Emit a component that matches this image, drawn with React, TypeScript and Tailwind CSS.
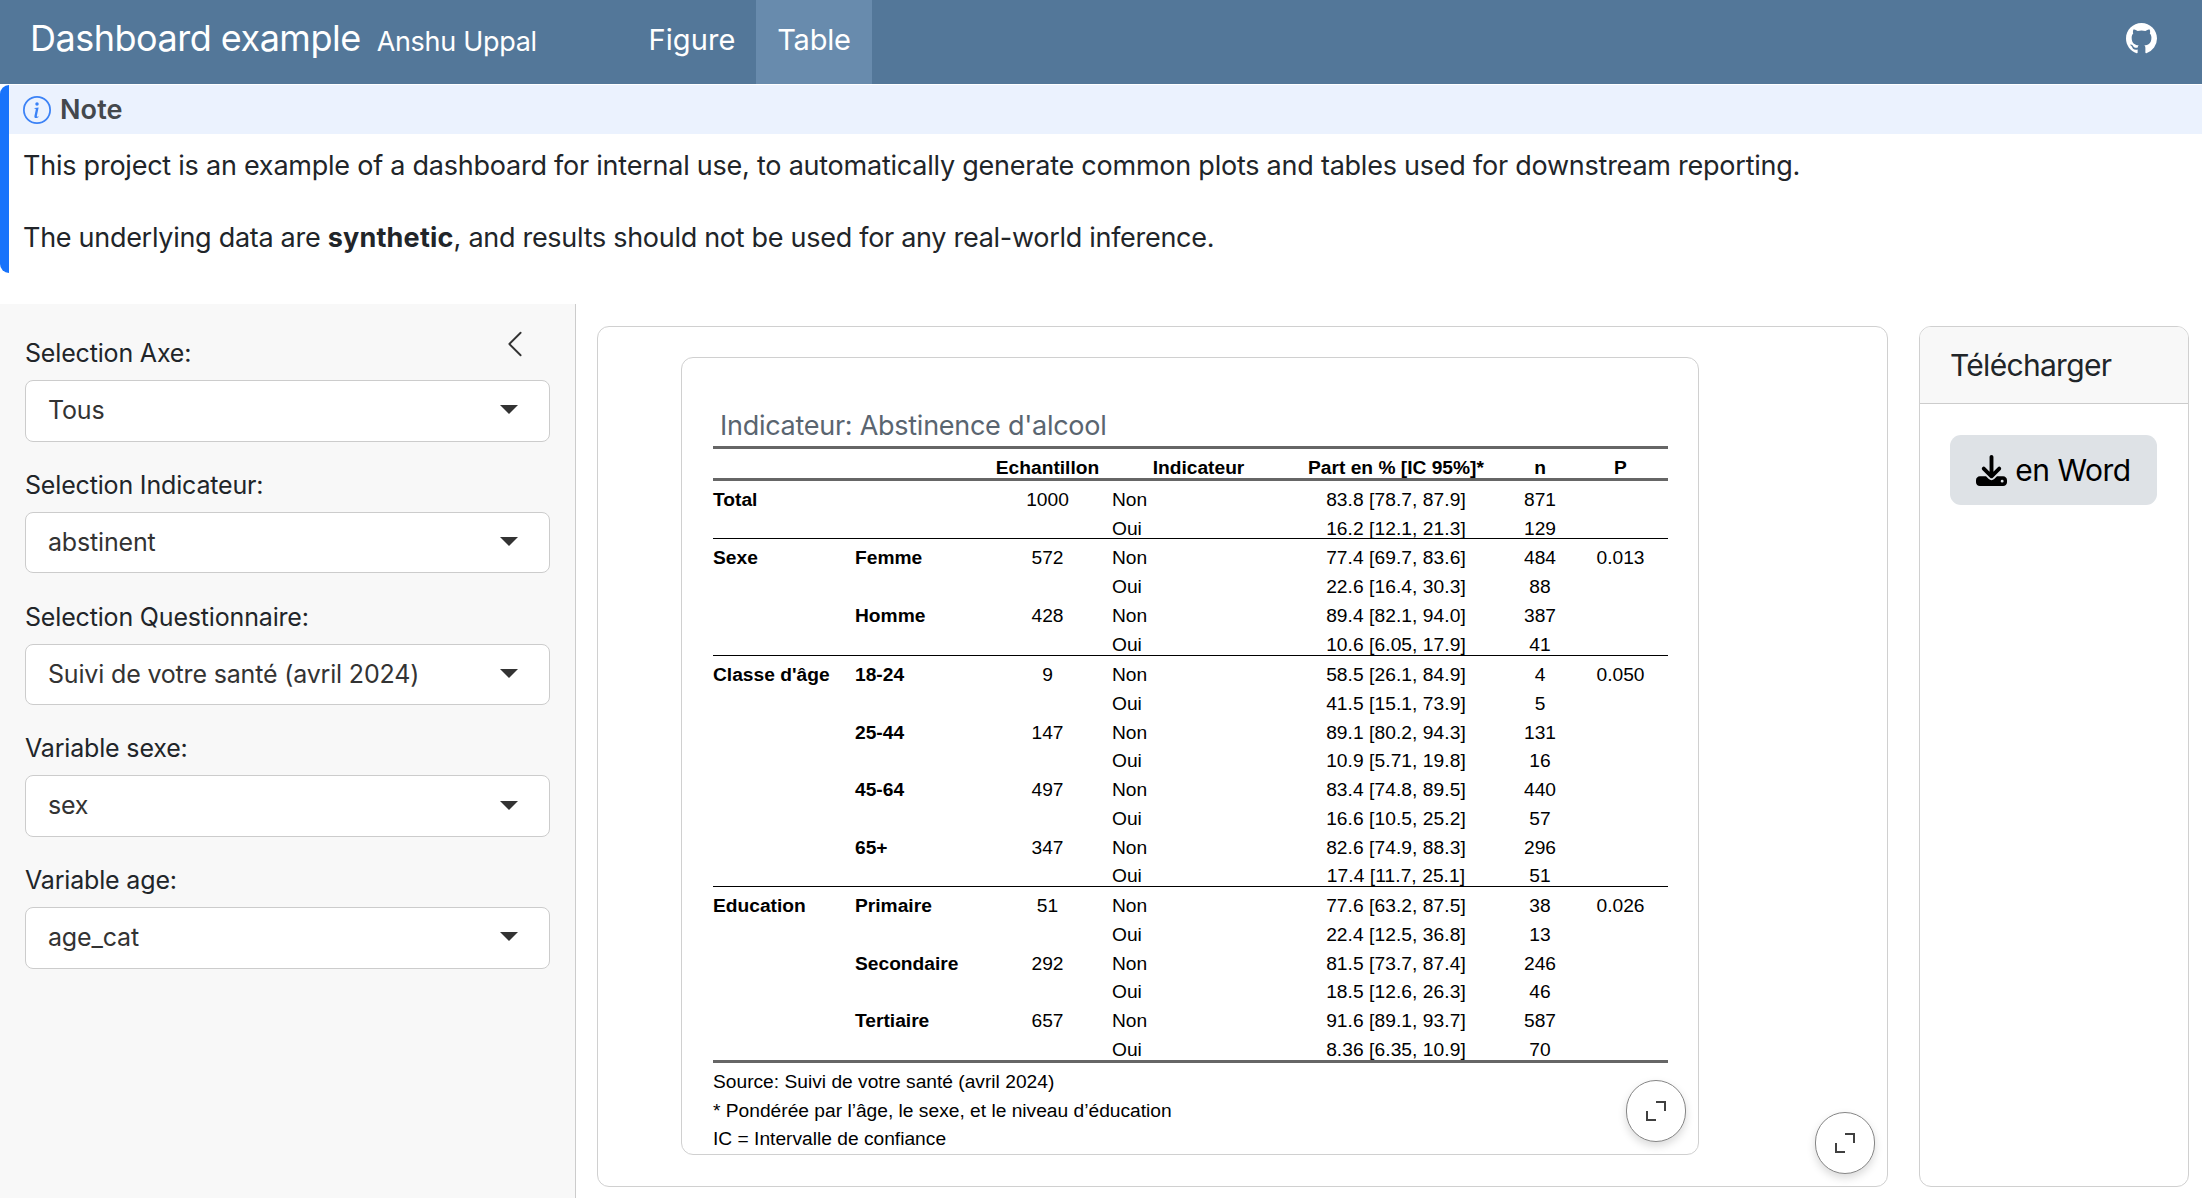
import { BsGithub, BsInfoCircle, BsChevronLeft } from 'react-icons/bs';
import { FaDownload } from 'react-icons/fa6';

const selects = [
  { label: 'Selection Axe:', value: 'Tous' },
  { label: 'Selection Indicateur:', value: 'abstinent' },
  { label: 'Selection Questionnaire:', value: 'Suivi de votre santé (avril 2024)' },
  { label: 'Variable sexe:', value: 'sex' },
  { label: 'Variable age:', value: 'age_cat' },
];

type Row = [string, string, string, string, string, string, string];

const groups: { height: string; rows: Row[] }[] = [
  {
    height: 'h-[58px]',
    rows: [
      ['Total', '', '1000', 'Non', '83.8 [78.7, 87.9]', '871', ''],
      ['', '', '', 'Oui', '16.2 [12.1, 21.3]', '129', ''],
    ],
  },
  {
    height: 'h-[117px]',
    rows: [
      ['Sexe', 'Femme', '572', 'Non', '77.4 [69.7, 83.6]', '484', '0.013'],
      ['', '', '', 'Oui', '22.6 [16.4, 30.3]', '88', ''],
      ['', 'Homme', '428', 'Non', '89.4 [82.1, 94.0]', '387', ''],
      ['', '', '', 'Oui', '10.6 [6.05, 17.9]', '41', ''],
    ],
  },
  {
    height: 'h-[231px]',
    rows: [
      ["Classe d'âge", '18-24', '9', 'Non', '58.5 [26.1, 84.9]', '4', '0.050'],
      ['', '', '', 'Oui', '41.5 [15.1, 73.9]', '5', ''],
      ['', '25-44', '147', 'Non', '89.1 [80.2, 94.3]', '131', ''],
      ['', '', '', 'Oui', '10.9 [5.71, 19.8]', '16', ''],
      ['', '45-64', '497', 'Non', '83.4 [74.8, 89.5]', '440', ''],
      ['', '', '', 'Oui', '16.6 [10.5, 25.2]', '57', ''],
      ['', '65+', '347', 'Non', '82.6 [74.9, 88.3]', '296', ''],
      ['', '', '', 'Oui', '17.4 [11.7, 25.1]', '51', ''],
    ],
  },
  {
    height: 'h-[176px]',
    rows: [
      ['Education', 'Primaire', '51', 'Non', '77.6 [63.2, 87.5]', '38', '0.026'],
      ['', '', '', 'Oui', '22.4 [12.5, 36.8]', '13', ''],
      ['', 'Secondaire', '292', 'Non', '81.5 [73.7, 87.4]', '246', ''],
      ['', '', '', 'Oui', '18.5 [12.6, 26.3]', '46', ''],
      ['', 'Tertiaire', '657', 'Non', '91.6 [89.1, 93.7]', '587', ''],
      ['', '', '', 'Oui', '8.36 [6.35, 10.9]', '70', ''],
    ],
  },
];

function Expand() {
  return (
    <button className="absolute bottom-[12px] right-[12px] flex h-[62px] w-[60px] items-center justify-center rounded-full border border-[#868686] bg-white text-[#404040] shadow-[0_4px_8px_rgba(0,0,0,0.15)]">
      <svg width="20" height="20" viewBox="0 0 20 20" fill="none" stroke="currentColor" strokeWidth="2">
        <path d="M10 1h9v9M1 10v9h9" />
      </svg>
    </button>
  );
}

function TableRow({ row }: { row: Row }) {
  return (
    <div className="grid min-h-0 flex-1 grid-cols-[142px_128px_129px_173px_222px_66px_1fr] pt-[6px] text-center">
      <span className="text-left font-bold">{row[0]}</span>
      <span className="text-left font-bold">{row[1]}</span>
      <span>{row[2]}</span>
      <span className="text-left">{row[3]}</span>
      <span className="tracking-[0.06px]">{row[4]}</span>
      <span>{row[5]}</span>
      <span>{row[6]}</span>
    </div>
  );
}

export default function App() {
  return (
    <div className="flex h-[1198px] w-[2202px] flex-col overflow-hidden bg-white font-['Inter',sans-serif] text-[#212529]">
      <header className="flex h-[84px] shrink-0 bg-[#537799] text-white">
        <div className="flex w-[627px] shrink-0 items-baseline whitespace-nowrap pl-[30px] pt-[15px]">
          <span className="text-[36px] leading-[46px] tracking-[-0.5px]">Dashboard example</span>
          <span className="ml-[16px] text-[27px] tracking-[-0.3px]">Anshu Uppal</span>
        </div>
        <nav className="flex text-center text-[29px] leading-[79px]">
          <a className="w-[129px] pl-px tracking-[0.1px]">Figure</a>
          <a className="w-[116px] bg-[#688bad] tracking-[-0.2px]">Table</a>
        </nav>
        <BsGithub className="ml-auto mr-[45px] mt-[23px] size-[31px]" />
      </header>

      <section className="mt-px flex h-[188px] shrink-0 flex-col rounded-l-[9px] border-l-[9px] border-[#1873fb] text-[27px]">
        <div className="flex h-[49px] items-center bg-[#ebf2fe] pl-[14px] pt-px font-semibold tracking-[0.1px] text-[#44484d]">
          <BsInfoCircle className="mr-[9px] size-[28px] text-[#3b82f6]" />
          Note
        </div>
        <div className="pl-[14px] leading-[40px]">
          <p className="mt-[12px] tracking-[-0.235px]">
            This project is an example of a dashboard for internal use, to automatically generate common plots and tables used for downstream reporting.
          </p>
          <p className="mt-[32px] tracking-[-0.29px]">
            The underlying data are <strong className="tracking-[0.2px]">synthetic</strong>, and results should not be used for any real-world inference.
          </p>
        </div>
      </section>

      <main className="mt-[31px] flex min-h-0 flex-1">
        <aside className="relative w-[576px] shrink-0 border-r border-[#ccc] bg-[#f8f8f8] px-[25px] pt-[30px]">
          <BsChevronLeft className="absolute right-[45px] top-[25px] size-[30px] text-[#333]" />
          {selects.map((s) => (
            <div key={s.label} className="h-[131.8px] text-[25px] tracking-[-0.17px]">
              <div className="h-[46px] leading-[38px]">{s.label}</div>
              <div className="flex h-[61.5px] items-center justify-between rounded-[8px] border border-[#ccc] bg-white pl-[22px] pr-[31px] text-[#333]">
                <span>{s.value}</span>
                <svg className="mb-[2px]" width="18" height="9" viewBox="0 0 18 9">
                  <path d="M0 0h18L9 9z" fill="#333" />
                </svg>
              </div>
            </div>
          ))}
        </aside>

        <div className="relative ml-[21px] mt-[22px] h-[861px] w-[1291px] shrink-0 rounded-[12px] border border-[#d0d0d0] pl-[83px] pt-[30px]">
          <div className="relative h-[798px] w-[1018px] rounded-[12px] border border-[#d0d0d0] pl-[31px] pt-[54px]">
            <h2 className="h-[34px] pl-[7px] text-[27px] font-normal leading-[27px] tracking-[-0.27px] text-[#5a6570]">
              Indicateur: Abstinence d'alcool
            </h2>
            <div className="w-[955px] font-['Liberation_Sans',sans-serif] text-[19.2px] leading-[25px] text-black">
              <div className="grid h-[35px] grid-cols-[142px_128px_129px_173px_222px_66px_1fr] border-y-[3px] border-[#666] pt-[6px] text-center font-bold">
                <span />
                <span />
                <span>Echantillon</span>
                <span>Indicateur</span>
                <span>Part en % [IC 95%]*</span>
                <span>n</span>
                <span>P</span>
              </div>
              {groups.map((g, i) => (
                <div
                  key={i}
                  className={`flex flex-col border-b border-black last-of-type:border-b-[3px] last-of-type:border-[#666] ${g.height}`}
                >
                  {g.rows.map((r, j) => (
                    <TableRow key={j} row={r} />
                  ))}
                </div>
              ))}
              <footer className="pt-[5px] leading-[28.6px]">
                <p>Source: Suivi de votre santé (avril 2024)</p>
                <p>* Pondérée par l’âge, le sexe, et le niveau d’éducation</p>
                <p>IC = Intervalle de confiance</p>
              </footer>
            </div>
            <Expand />
          </div>
          <Expand />
        </div>

        <div className="ml-[31px] mt-[22px] h-[861px] w-[270px] rounded-[12px] border border-[#d0d0d0]">
          <div className="h-[77px] rounded-t-[11px] border-b border-[#ccc] bg-[#f8f8f8] pl-[30px] text-[30px] leading-[76px] tracking-[-0.7px]">
            Télécharger
          </div>
          <button className="ml-[30px] mt-[31px] flex h-[70px] w-[207px] items-center justify-center gap-[8px] rounded-[11px] bg-[#dee2e6] text-[30px] tracking-[-0.5px] text-black">
            <FaDownload className="size-[31px]" />
            <span>en Word</span>
          </button>
        </div>
      </main>
    </div>
  );
}
